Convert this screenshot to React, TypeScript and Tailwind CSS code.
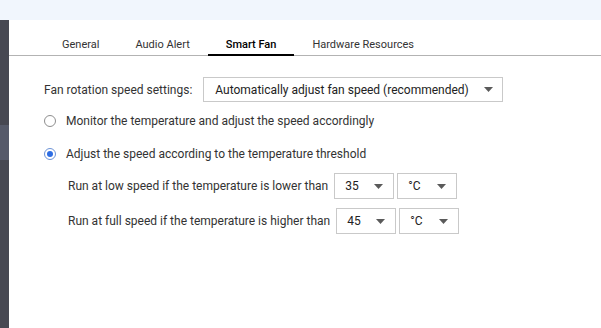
import { useState } from "react";

const tabs = ["General", "Audio Alert", "Smart Fan", "Hardware Resources"];

function Caret() {
  return (
    <svg width="9" height="5" viewBox="0 0 9 5" className="shrink-0">
      <path d="M0 0h9L4.5 5z" fill="#5a5a5a" />
    </svg>
  );
}

function Select({ value, className }: { value: string; className: string }) {
  return (
    <div
      className={`flex items-center justify-between border border-[#c9c9c9] bg-white text-[12px] text-[#222] ${className}`}
    >
      <span>{value}</span>
      <Caret />
    </div>
  );
}

function Radio({ checked, label, onClick }: { checked: boolean; label: string; onClick: () => void }) {
  return (
    <div className="flex h-[20px] cursor-pointer items-center gap-[10px]" onClick={onClick}>
      <span
        className={`flex h-[12px] w-[12px] items-center justify-center rounded-full border ${
          checked ? "border-[#6d93d6]" : "border-[#8e8e8e]"
        }`}
      >
        {checked && <span className="h-[6px] w-[6px] rounded-full bg-[#2d6de3]" />}
      </span>
      <span className="text-[12px] text-[#333]">{label}</span>
    </div>
  );
}

export default function App() {
  const [mode, setMode] = useState(1);

  return (
    <div className="flex h-[328px] w-[601px] flex-col overflow-hidden bg-white font-['Roboto',sans-serif]">
      <div className="h-[20px] shrink-0 bg-[#f1f6fd]" />
      <div className="flex flex-1">
        {/* side strip */}
        <div className="flex w-[9px] flex-col">
          <div className="h-[105px] bg-[#474852]" />
          <div className="h-[35px] bg-[#565a6a]" />
          <div className="flex-1 bg-[#474852]" />
        </div>

        <div className="flex-1">
          <div className="flex h-[36px] items-end border-b border-[#b3b3b3] pl-[35px]">
            {tabs.map((t) => (
              <div
                key={t}
                className={`-mb-px border-b-2 px-[18px] pb-[2px] text-[11px] leading-[14px] ${
                  t === "Smart Fan" ? "border-black font-medium text-black" : "border-transparent text-[#333]"
                }`}
              >
                {t}
              </div>
            ))}
          </div>

          <div className="flex flex-col pl-[35px] pt-[21px]">
            <div className="flex items-center gap-[11px]">
              <span className="text-[12px] text-[#333]">Fan rotation speed settings:</span>
              <Select
                value="Automatically adjust fan speed (recommended)"
                className="h-[25px] w-[300px] pl-[11px] pr-[9px]"
              />
            </div>

            <div className="mt-[9px]">
              <Radio
                checked={mode === 0}
                label="Monitor the temperature and adjust the speed accordingly"
                onClick={() => setMode(0)}
              />
            </div>
            <div className="mt-[13px]">
              <Radio
                checked={mode === 1}
                label="Adjust the speed according to the temperature threshold"
                onClick={() => setMode(1)}
              />
            </div>

            <div className="mt-[9px] flex h-[26px] items-center pl-[24px]">
              <span className="text-[12px] text-[#333]">Run at low speed if the temperature is lower than</span>
              <Select value="35" className="ml-[6px] h-[26px] w-[60px] pl-[10px] pr-[10px]" />
              <Select value="°C" className="ml-[3px] h-[26px] w-[60px] pl-[10px] pr-[10px]" />
            </div>
            <div className="mt-[9px] flex h-[26px] items-center pl-[24px]">
              <span className="text-[12px] text-[#333]">Run at full speed if the temperature is higher than</span>
              <Select value="45" className="ml-[6px] h-[26px] w-[60px] pl-[10px] pr-[10px]" />
              <Select value="°C" className="ml-[3px] h-[26px] w-[60px] pl-[10px] pr-[10px]" />
            </div>
          </div>
        </div>
      </div>
    </div>
  );
}
